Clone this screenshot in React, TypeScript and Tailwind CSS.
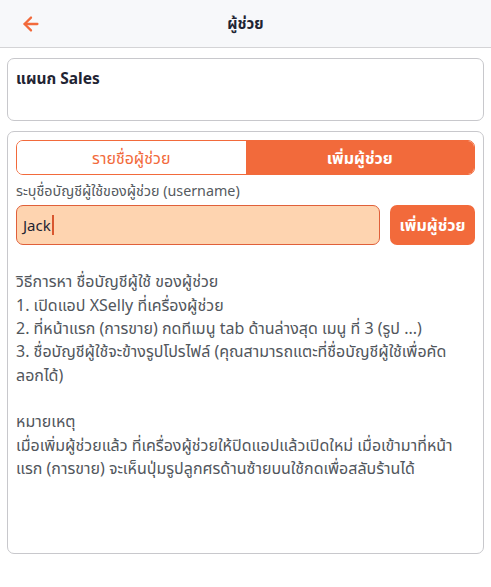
import { ArrowLeft } from 'lucide-react'

export default function App() {
  const font = { fontFamily: '"Noto Sans", "Noto Sans Thai", "Noto Sans Thai Looped", sans-serif' }

  return (
    <div className="w-[491px] h-[587px] bg-white text-[#1f2433]" style={font}>
      {/* header */}
      <div className="h-[48px] bg-[#f7f8fa] border-b border-[#d4d4d6] flex items-center relative">
        <ArrowLeft className="absolute left-[20px] top-[13px] h-[22px] w-[22px] text-[#f26a3b]" strokeWidth={2.5} />
        <div className="w-full text-center text-[15px] font-bold">ผู้ช่วย</div>
      </div>

      <div className="px-[7px] pt-[10px] space-y-[10px]">
        {/* department */}
        <div className="h-[63px] border border-[#c8c8cc] rounded-[7px] px-[8px] pt-[7px]">
          <span className="text-[15.5px] font-bold">แผนก Sales</span>
        </div>

        {/* add assistant card */}
        <div className="h-[423px] border border-[#c8c8cc] rounded-[7px] px-[8px] pt-[8px]">
          <div className="flex h-[35px] rounded-[7px] border border-[#f26a3b] overflow-hidden text-[16px]">
            <div className="flex-1 flex items-center justify-center text-[#f26a3b] bg-white">รายชื่อผู้ช่วย</div>
            <div className="flex-1 flex items-center justify-center bg-[#f26a3b] text-white font-bold">เพิ่มผู้ช่วย</div>
          </div>

          <div className="mt-[5px] text-[14.3px] text-[#555a60]">ระบุชื่อบัญชีผู้ใช้ของผู้ช่วย (username)</div>

          <div className="mt-[4px] flex gap-[10px]">
            <div className="flex-1 h-[40px] bg-[#fed4b0] border border-[#e0603a] rounded-[7px] flex items-center px-[6px] text-[15px] text-[#1f2433]">
              Jack<span className="inline-block w-[2px] h-[20px] bg-[#d8562f] ml-[1px]" />
            </div>
            <button className="w-[85px] h-[40px] bg-[#f26a3b] rounded-[7px] text-white font-bold text-[16px]">เพิ่มผู้ช่วย</button>
          </div>

          <div className="mt-[25px] text-[16px] leading-[23.3px] text-[#51565c]">
            <p>วิธีการหา ชื่อบัญชีผู้ใช้ ของผู้ช่วย</p>
            <p>1. เปิดแอป XSelly ที่เครื่องผู้ช่วย</p>
            <p>2. ที่หน้าแรก (การขาย) กดทีเมนู tab ด้านล่างสุด เมนู ที่ 3 (รูป ...)</p>
            <p>3. ชื่อบัญชีผู้ใช้จะข้างรูปโปรไฟล์ (คุณสามารถแตะที่ชื่อบัญชีผู้ใช้เพื่อคัด<br />ลอกได้)</p>
            <p>&nbsp;</p>
            <p>หมายเหตุ</p>
            <p>เมื่อเพิ่มผู้ช่วยแล้ว ที่เครื่องผู้ช่วยให้ปิดแอปแล้วเปิดใหม่ เมื่อเข้ามาที่หน้าแรก (การขาย) จะเห็นปุ่มรูปลูกศรด้านซ้ายบนใช้กดเพื่อสลับร้านได้</p>
          </div>
        </div>
      </div>
    </div>
  )
}
